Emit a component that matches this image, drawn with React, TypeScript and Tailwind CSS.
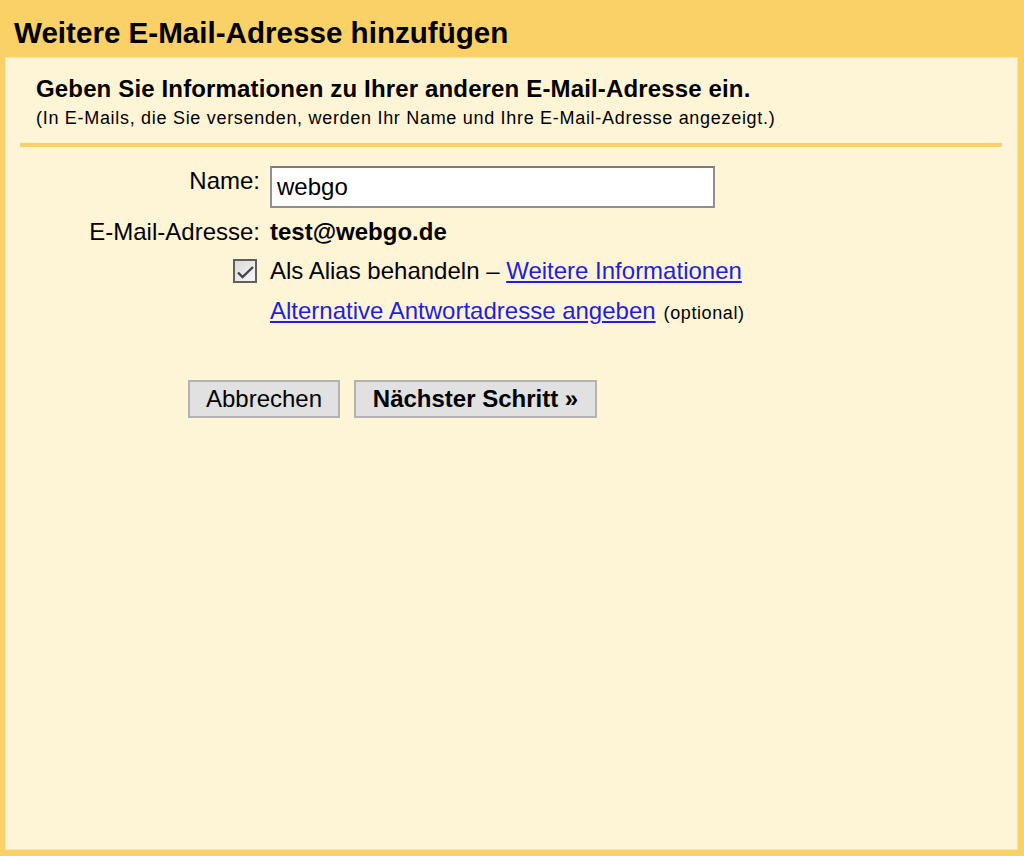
import React, { useState } from 'react';

const font = { fontFamily: '"Liberation Sans", Arial, sans-serif' };

const AliasCheckbox: React.FC<{ checked: boolean; onToggle: () => void }> = ({ checked, onToggle }) => (
    <button
        type="button"
        onClick={onToggle}
        className="w-[24px] h-[24px] border-2 border-[#5f5f5f] bg-gradient-to-br from-[#d9d9d9] to-[#f8f8f8] flex items-center justify-center"
    >
        {checked && (
            <svg width="20" height="20" viewBox="0 0 20 20">
                <path d="M3 11.5 L7.5 16 L18 6" fill="none" stroke="#454545" strokeWidth="2.4" />
            </svg>
        )}
    </button>
);

export default function App() {
    const [name, setName] = useState('webgo');
    const [alias, setAlias] = useState(true);

    return (
        <div className="w-[1024px] h-[856px] bg-[#f9d166] flex flex-col text-black" style={font}>
            <div className="h-[57px] pt-[18px] pl-[14px]">
                <h1 className="text-[29.6px] leading-[30px] font-bold">Weitere E-Mail-Adresse hinzufügen</h1>
            </div>

            <div className="flex-1 ml-[5px] mr-[6px] mb-[6px] bg-[#fef5d6] border border-[#fbe3a0]">
                <div className="pt-[18px] pl-[30px]">
                    <h2 className="text-[24px] leading-[26px] font-bold tracking-[0.15px]">
                        Geben Sie Informationen zu Ihrer anderen E-Mail-Adresse ein.
                    </h2>
                    <p className="text-[18px] leading-[22px] mt-[5px] tracking-[0.7px]">
                        (In E-Mails, die Sie versenden, werden Ihr Name und Ihre E-Mail-Adresse angezeigt.)
                    </p>
                </div>

                <div className="h-[4px] bg-[#f9d166] ml-[14px] mr-[15px] mt-[14px]" />

                <div className="mt-[19px] text-[24px] leading-[28px]">
                    <div className="flex h-[42px]">
                        <label className="w-[254px] text-right pt-[1px]">Name:</label>
                        <input
                            value={name}
                            onChange={(e) => setName(e.target.value)}
                            className="ml-[10px] w-[445px] h-[42px] border-2 border-[#8f8f8f] border-t-[#7a7a7a] bg-white px-[5px] text-[24px] outline-none"
                            style={font}
                        />
                    </div>

                    <div className="flex mt-[10px]">
                        <span className="w-[254px] text-right">E-Mail-Adresse:</span>
                        <span className="ml-[10px] font-bold">test@webgo.de</span>
                    </div>

                    <div className="flex mt-[11px]">
                        <div className="w-[254px] flex justify-end items-center pr-[3px]">
                            <AliasCheckbox checked={alias} onToggle={() => setAlias(!alias)} />
                        </div>
                        <span className="ml-[10px]">
                            Als Alias behandeln –{' '}
                            <a href="#" className="text-[#1f1fdd] underline">Weitere Informationen</a>
                        </span>
                    </div>

                    <div className="flex mt-[12px]">
                        <span className="w-[254px]" />
                        <span className="ml-[10px]">
                            <a href="#" className="text-[#1f1fdd] underline">Alternative Antwortadresse angeben</a>
                            <span className="text-[18px] ml-[8px] tracking-[0.6px]">(optional)</span>
                        </span>
                    </div>

                    <div className="flex gap-[14px] mt-[53px] ml-[182px]">
                        <button className="w-[152px] h-[38px] bg-[#e1e1e1] border-2 border-[#b3b3b3] text-[24px] leading-none" style={font}>
                            Abbrechen
                        </button>
                        <button className="w-[243px] h-[38px] bg-[#e1e1e1] border-2 border-[#b3b3b3] text-[24px] font-bold leading-none" style={font}>
                            Nächster Schritt »
                        </button>
                    </div>
                </div>
            </div>
        </div>
    );
}
